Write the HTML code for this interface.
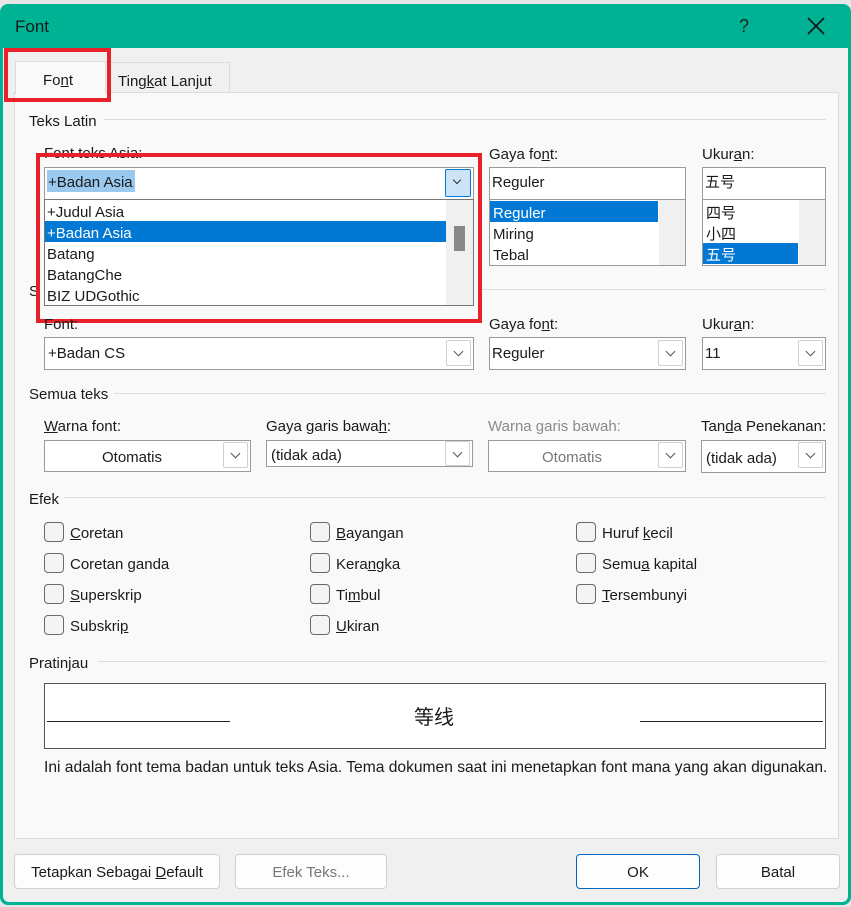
<!DOCTYPE html>
<html><head><meta charset="utf-8"><style>
*{box-sizing:border-box;margin:0;padding:0}
body{width:851px;height:907px;background:#e6e6e6;position:relative;overflow:hidden;font-family:"Liberation Sans","Noto Sans CJK SC",sans-serif;font-size:15px;color:#1a1a1a}
.a{position:absolute}
.t{position:absolute;white-space:nowrap;line-height:18px;margin-top:2px}
.box{position:absolute;background:#fff;border:1px solid #9a9a9a}
.dd{position:absolute;width:25px;height:26px;background:#fff;border:1px solid #d0d0d0;border-radius:2px}
.dd:after{content:"";position:absolute;left:8px;top:7px;width:6px;height:6px;border-right:1px solid #555;border-bottom:1px solid #555;transform:rotate(45deg)}
.sec{position:absolute;height:1px;background:#dcdcdc}
.cb{position:absolute;width:20px;height:20px;border:1px solid #6a6a6a;border-radius:4px;background:#f4f4f4}
.sel{position:absolute;background:#0078d4;color:#fff}
.btn{position:absolute;height:35px;background:#fdfdfd;border:1px solid #d0d0d0;border-radius:4px;text-align:center;line-height:35px;font-size:15px}
u{text-decoration:underline}
</style></head><body>
<div class="a" style="left:0;top:4px;width:851px;height:901px;background:#00b294;border-radius:8px 8px 8px 8px"></div>
<div class="a" style="left:3px;top:48px;width:845px;height:854px;background:#f0f0f0;border-radius:0 0 6px 6px"></div>
<div class="t" style="left:15px;top:16px;font-size:17px">Font</div>
<div class="t" style="left:739px;top:15px;font-size:18px;color:#222">?</div>
<svg class="a" style="left:806px;top:16px" width="20" height="20"><path d="M2 2L18 18M18 2L2 18" stroke="#111" stroke-width="1.6"/></svg>
<div class="a" style="left:105px;top:62px;width:125px;height:31px;background:#f0f0f0;border:1px solid #dcdcdc;border-bottom:none"></div>
<div class="t" style="left:118px;top:71px">Ting<u>k</u>at Lanjut</div>
<div class="a" style="left:14px;top:92px;width:825px;height:747px;background:#f9f9f9;border:1px solid #dcdcdc"></div>
<div class="a" style="left:15px;top:61px;width:91px;height:33px;background:#f9f9f9;border:1px solid #dcdcdc;border-bottom:none"></div>
<div class="t" style="left:43px;top:70px">Fo<u>n</u>t</div>
<div class="a" style="left:4px;top:48px;width:107px;height:54px;border:4px solid #e8202a"></div>

<div class="t" style="left:29px;top:111px">Teks Latin</div>
<div class="sec" style="left:104px;top:119px;width:722px"></div>
<div class="t" style="left:44px;top:143px">Font teks Asia:</div>
<div class="box" style="left:44px;top:167px;width:430px;height:33px"></div>
<div class="a" style="left:47px;top:170px;width:88px;height:22px;background:#99c9ef"></div>
<div class="t" style="left:48px;top:172px">+Badan Asia</div>
<div class="a" style="left:445px;top:169px;width:26px;height:28px;background:#cce4f7;border:1px solid #0078d4;border-radius:2px"></div>
<div class="a" style="left:454px;top:177px;width:6px;height:6px;border-right:1px solid #333;border-bottom:1px solid #333;transform:rotate(45deg)"></div>
<div class="box" style="left:44px;top:199px;width:430px;height:107px;border-color:#777"></div>
<div class="a" style="left:446px;top:200px;width:27px;height:105px;background:#f0f0f0"></div>
<div class="a" style="left:454px;top:226px;width:11px;height:25px;background:#888"></div>
<div class="sel" style="left:45px;top:221px;width:401px;height:21px"></div>
<div class="t" style="left:47px;top:202px">+Judul Asia</div>
<div class="t" style="left:47px;top:223px;color:#fff">+Badan Asia</div>
<div class="t" style="left:47px;top:244px">Batang</div>
<div class="t" style="left:47px;top:265px">BatangChe</div>
<div class="t" style="left:47px;top:286px">BIZ UDGothic</div>
<div class="t" style="left:29px;top:281px">S</div>

<div class="t" style="left:489px;top:144px">Gaya fo<u>n</u>t:</div>
<div class="box" style="left:489px;top:167px;width:197px;height:33px"></div>
<div class="t" style="left:492px;top:172px">Reguler</div>
<div class="box" style="left:489px;top:199px;width:197px;height:67px"></div>
<div class="a" style="left:659px;top:200px;width:26px;height:65px;background:#f0f0f0"></div>
<div class="sel" style="left:490px;top:201px;width:168px;height:21px"></div>
<div class="t" style="left:493px;top:203px;color:#fff">Reguler</div>
<div class="t" style="left:493px;top:224px">Miring</div>
<div class="t" style="left:493px;top:245px">Tebal</div>

<div class="t" style="left:702px;top:144px">Ukur<u>a</u>n:</div>
<div class="box" style="left:702px;top:167px;width:124px;height:33px"></div>
<div class="t" style="left:705px;top:172px">五号</div>
<div class="box" style="left:702px;top:199px;width:124px;height:67px"></div>
<div class="a" style="left:799px;top:200px;width:26px;height:65px;background:#f0f0f0"></div>
<div class="sel" style="left:703px;top:243px;width:95px;height:21px"></div>
<div class="t" style="left:706px;top:203px">四号</div>
<div class="t" style="left:706px;top:224px">小四</div>
<div class="t" style="left:706px;top:245px;color:#fff">五号</div>
<div class="sec" style="left:482px;top:289px;width:344px"></div>

<div class="a" style="left:36px;top:153px;width:446px;height:170px;border:4px solid #e8202a"></div>

<div class="t" style="left:44px;top:314px">Font:</div>
<div class="box" style="left:44px;top:337px;width:430px;height:33px"></div>
<div class="t" style="left:48px;top:343px">+Badan CS</div>
<div class="dd" style="left:446px;top:340px"></div>
<div class="t" style="left:489px;top:314px">Gaya fo<u>n</u>t:</div>
<div class="box" style="left:489px;top:337px;width:197px;height:33px"></div>
<div class="t" style="left:492px;top:343px">Reguler</div>
<div class="dd" style="left:658px;top:340px"></div>
<div class="t" style="left:702px;top:314px">Ukur<u>a</u>n:</div>
<div class="box" style="left:702px;top:337px;width:124px;height:33px"></div>
<div class="t" style="left:705px;top:343px">11</div>
<div class="dd" style="left:798px;top:340px"></div>

<div class="t" style="left:29px;top:384px">Semua teks</div>
<div class="sec" style="left:114px;top:393px;width:712px"></div>
<div class="t" style="left:44px;top:416px"><u>W</u>arna font:</div>
<div class="box" style="left:44px;top:440px;width:207px;height:32px"></div>
<div class="t" style="left:102px;top:447px">Otomatis</div>
<div class="dd" style="left:223px;top:442px"></div>
<div class="t" style="left:266px;top:416px">Gaya garis bawa<u>h</u>:</div>
<div class="box" style="left:266px;top:440px;width:207px;height:27px"></div>
<div class="t" style="left:271px;top:445px">(tidak ada)</div>
<div class="dd" style="left:445px;top:441px;height:25px"></div>
<div class="t" style="left:488px;top:416px;color:#8a8a8a">Warna garis bawah:</div>
<div class="box" style="left:488px;top:440px;width:198px;height:32px"></div>
<div class="t" style="left:542px;top:447px;color:#777">Otomatis</div>
<div class="dd" style="left:658px;top:442px"></div>
<div class="t" style="left:701px;top:416px">Tan<u>d</u>a Penekanan:</div>
<div class="box" style="left:701px;top:440px;width:125px;height:33px"></div>
<div class="t" style="left:706px;top:448px">(tidak ada)</div>
<div class="dd" style="left:798px;top:442px"></div>

<div class="t" style="left:29px;top:489px">Efek</div>
<div class="sec" style="left:64px;top:497px;width:762px"></div>
<div class="cb" style="left:44px;top:522px"></div><div class="t" style="left:70px;top:523px"><u>C</u>oretan</div>
<div class="cb" style="left:44px;top:553px"></div><div class="t" style="left:70px;top:554px">Coretan <u>g</u>anda</div>
<div class="cb" style="left:44px;top:584px"></div><div class="t" style="left:70px;top:585px"><u>S</u>uperskrip</div>
<div class="cb" style="left:44px;top:615px"></div><div class="t" style="left:70px;top:616px">Subskri<u>p</u></div>
<div class="cb" style="left:310px;top:522px"></div><div class="t" style="left:336px;top:523px"><u>B</u>ayangan</div>
<div class="cb" style="left:310px;top:553px"></div><div class="t" style="left:336px;top:554px">Kera<u>n</u>gka</div>
<div class="cb" style="left:310px;top:584px"></div><div class="t" style="left:336px;top:585px">Ti<u>m</u>bul</div>
<div class="cb" style="left:310px;top:615px"></div><div class="t" style="left:336px;top:616px"><u>U</u>kiran</div>
<div class="cb" style="left:576px;top:522px"></div><div class="t" style="left:602px;top:523px">Huruf <u>k</u>ecil</div>
<div class="cb" style="left:576px;top:553px"></div><div class="t" style="left:602px;top:554px">Semu<u>a</u> kapital</div>
<div class="cb" style="left:576px;top:584px"></div><div class="t" style="left:602px;top:585px"><u>T</u>ersembunyi</div>

<div class="t" style="left:29px;top:653px">Pratinjau</div>
<div class="sec" style="left:98px;top:661px;width:728px"></div>
<div class="a" style="left:44px;top:683px;width:782px;height:66px;background:#fff;border:1px solid #555"></div>
<div class="a" style="left:47px;top:721px;width:183px;height:1px;background:#222"></div>
<div class="a" style="left:640px;top:721px;width:183px;height:1px;background:#222"></div>
<div class="t" style="left:414px;top:704px;font-size:20px;line-height:24px">等线</div>
<div class="t" style="left:44px;top:757px;font-size:15.6px">Ini adalah font tema badan untuk teks Asia. Tema dokumen saat ini menetapkan font mana yang akan digunakan.</div>

<div class="btn" style="left:14px;top:854px;width:206px">Tetapkan Sebagai <u>D</u>efault</div>
<div class="btn" style="left:235px;top:854px;width:152px;color:#777">Efek Teks...</div>
<div class="btn" style="left:576px;top:854px;width:124px;border-color:#0067c0">OK</div>
<div class="btn" style="left:716px;top:854px;width:124px">Batal</div>
</body></html>
